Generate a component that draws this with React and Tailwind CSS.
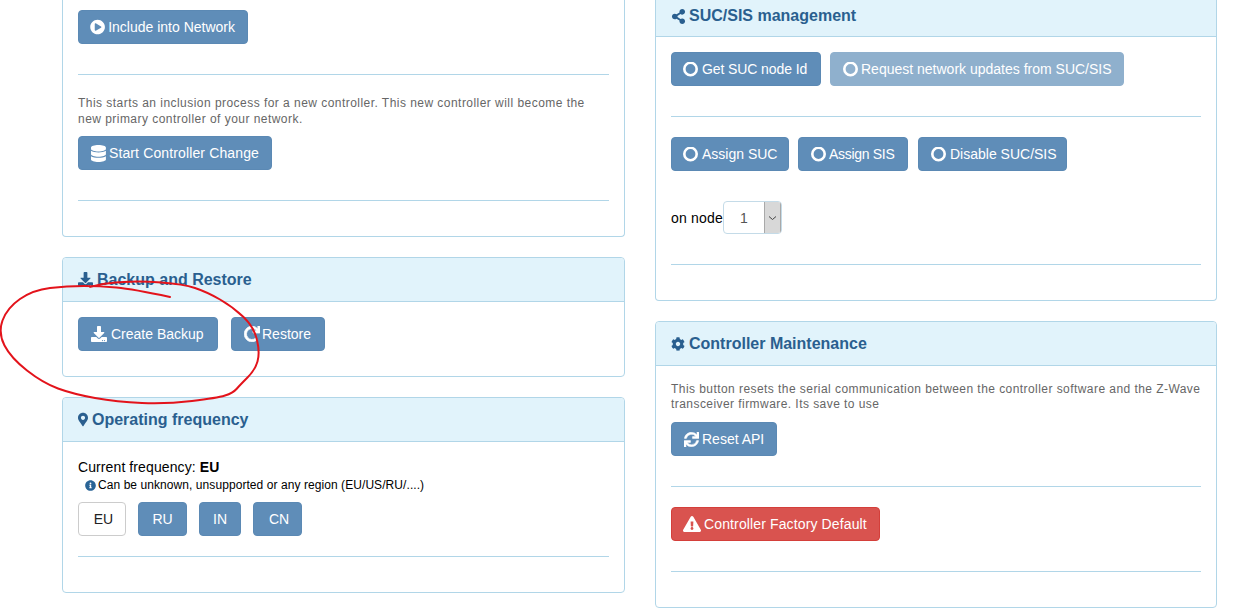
import { FaPlayCircle, FaDatabase, FaDownload, FaRedo, FaSync, FaExclamationTriangle, FaCog, FaMapMarkerAlt, FaInfoCircle, FaShareAlt } from 'react-icons/fa';

// red pen annotation drawn on top of the screenshot
const curve = [
  [170, 297], [133, 289], [100, 286], [67, 286], [33, 290], [7, 308], [-2, 333], [11, 358], [43, 383], [73, 394],
  [117, 402], [167, 404], [217, 398], [233, 393], [240, 385], [255, 370], [260, 353], [254, 327], [233, 307],
  [207, 292], [183, 284], [140, 281], [107, 283], [90, 287],
];

function curvePath(points) {
  let d = `M${points[0][0]} ${points[0][1]}`;
  for (let i = 1; i < points.length - 1; i++) {
    const mx = (points[i][0] + points[i + 1][0]) / 2;
    const my = (points[i][1] + points[i + 1][1]) / 2;
    d += ` Q${points[i][0]} ${points[i][1]} ${mx} ${my}`;
  }
  const last = points[points.length - 1];
  return `${d} L${last[0]} ${last[1]}`;
}

function RingIcon({ className = '' }) {
  return (
    <svg className={`w-[15px] h-[15px] shrink-0 ${className}`} viewBox="0 0 15 15">
      <circle cx="7.5" cy="7" r="6.2" fill="none" stroke="currentColor" strokeWidth="2.6" />
    </svg>
  );
}

function Btn({ icon, children, faded, danger, className = '' }) {
  const color = danger
    ? 'bg-[#d9534f] border-[#d43f3a]'
    : faded
      ? 'bg-[#8fb0cd] border-[#8fb0cd]'
      : 'bg-[#5f8db8] border-[#5b89b4]';
  return (
    <button className={`h-[34px] px-3 border rounded text-sm text-white flex items-center whitespace-nowrap ${color} ${className}`}>
      {icon}
      {children}
    </button>
  );
}

function Panel({ icon, title, children, className = '', bodyClass = '' }) {
  return (
    <section className={`border border-[#b1d6e8] rounded bg-white ${className}`}>
      <h3 className="h-[44px] px-[15px] flex items-center gap-1 bg-[#e1f3fb] border-b border-[#b1d6e8] rounded-t text-base font-bold text-[#2a5f8f]">
        {icon}
        {title}
      </h3>
      <div className={`px-[15px] ${bodyClass}`}>{children}</div>
    </section>
  );
}

function Rule({ className = '' }) {
  return <hr className={`border-0 border-t border-[#b1d6e8] ${className}`} />;
}

export default function App() {
  return (
    <div className="relative w-[1234px] h-[612px] overflow-hidden bg-white font-['Liberation_Sans',Arial,sans-serif] text-sm text-black">
      <div className="flex gap-[30px] pl-[62px]">
        {/* Left column */}
        <div className="w-[563px] flex flex-col gap-5">
          <section className="h-[237px] border border-t-0 border-[#b1d6e8] rounded-b bg-white px-[15px] pt-[10px]">
            <Btn icon={<FaPlayCircle className="text-base -ml-px mr-[3px]" />} className="w-[170px]">Include into Network</Btn>
            <Rule className="mt-[30px]" />
            <p className="mt-5 text-xs leading-4 tracking-[0.46px] text-[#666]">
              This starts an inclusion process for a new controller. This new controller will become the
              <br />
              new primary controller of your network.
            </p>
            <Btn icon={<FaDatabase className="w-[15px] h-[17px] mr-[3px]" />} className="mt-[9px] w-[194px] tracking-[0.13px]">Start Controller Change</Btn>
            <Rule className="mt-[30px]" />
          </section>

          <Panel icon={<FaDownload className="text-[15px]" />} title="Backup and Restore" className="h-[120px]" bodyClass="pt-[15px]">
            <div className="flex gap-[13px]">
              <Btn icon={<FaDownload className="text-base mr-1" />} className="w-[140px]">Create Backup</Btn>
              <Btn icon={<FaRedo className="text-base mr-[2px]" stroke="currentColor" strokeWidth={24} />} className="w-[94px]">Restore</Btn>
            </div>
          </Panel>

          <Panel icon={<FaMapMarkerAlt className="w-[10px] h-[15px]" />} title="Operating frequency" className="h-[196px]" bodyClass="pt-[17px]">
            <p className="leading-[17px] tracking-[0.1px]">Current frequency: <b>EU</b></p>
            <p className="mt-[1px] ml-[7px] flex items-center gap-[2px] text-xs leading-4 tracking-[0.07px]">
              <FaInfoCircle className="text-[11px] text-[#2a6496]" />
              Can be unknown, unsupported or any region (EU/US/RU/....)
            </p>
            <div className="flex gap-3 mt-[9px]">
              <button className="h-[34px] w-12 pl-[3px] border border-[#ccc] rounded bg-white text-sm text-[#222]">EU</button>
              <Btn className="w-[49px] justify-center">RU</Btn>
              <Btn className="w-[42px] justify-center">IN</Btn>
              <Btn className="w-[49px] justify-center pl-[15px]">CN</Btn>
            </div>
            <Rule className="mt-5" />
          </Panel>
        </div>

        {/* Right column */}
        <div className="w-[562px] flex flex-col gap-5">
          <section className="h-[301px] border border-t-0 border-[#b1d6e8] rounded-b bg-white">
            <h3 className="h-[37px] px-[15px] pb-1 flex items-center gap-[3px] bg-[#e1f3fb] border-b border-[#b1d6e8] text-base font-bold text-[#2a5f8f]">
              <FaShareAlt className="text-[15px]" />
              SUC/SIS management
            </h3>
            <div className="px-[15px]">
              <div className="flex gap-[9px] mt-[15px]">
                <Btn icon={<RingIcon className="-ml-px mr-1" />} className="w-[150px] tracking-[-0.1px]">Get SUC node Id</Btn>
                <Btn faded icon={<RingIcon className="mr-[3px]" />} className="w-[294px]">Request network updates from SUC/SIS</Btn>
              </div>
              <Rule className="mt-[30px]" />
              <div className="flex gap-[9px] mt-5">
                <Btn icon={<RingIcon className="-ml-px mr-1" />} className="w-[118px]">Assign SUC</Btn>
                <Btn icon={<RingIcon className="mr-[3px]" />} className="w-[110px] tracking-[-0.3px]">Assign SIS</Btn>
                <Btn icon={<RingIcon className="mr-1" />} className="w-[149px] ml-px">Disable SUC/SIS</Btn>
              </div>
              <div className="flex items-center mt-[30px] h-[33px]">
                <span className="tracking-[0.2px]">on node</span>
                <div className="w-[59px] h-[33px] flex border border-[#c4dbe8] rounded overflow-hidden bg-white">
                  <span className="flex-1 pl-[16px] leading-[32px] text-[#555]">1</span>
                  <span className="w-[17px] flex items-center justify-center bg-[#d8d8d8] border-x border-[#a9a9a9]">
                    <svg className="w-[9px] h-[6px] text-[#444]" viewBox="0 0 9 6">
                      <path d="M1 1.5 4.5 4.5 8 1.5" fill="none" stroke="currentColor" strokeWidth="1" />
                    </svg>
                  </span>
                </div>
              </div>
              <Rule className="mt-[30px]" />
            </div>
          </section>

          <Panel icon={<FaCog className="text-[14px]" />} title="Controller Maintenance" className="h-[287px]" bodyClass="pt-[16px]">
            <p className="text-xs leading-[15px] tracking-[0.44px] text-[#666]">
              This button resets the serial communication between the controller software and the Z-Wave
              <br />
              transceiver firmware. Its save to use
            </p>
            <Btn icon={<FaSync className="text-[15px] mr-[3px]" stroke="currentColor" strokeWidth={16} />} className="mt-[10px]">Reset API</Btn>
            <Rule className="mt-[30px]" />
            <Btn danger icon={<FaExclamationTriangle className="text-lg -ml-px mr-[3px]" />} className="mt-5 w-[209px] tracking-[0.13px]">Controller Factory Default</Btn>
            <Rule className="mt-[30px]" />
          </Panel>
        </div>
      </div>

      <svg className="absolute inset-0 pointer-events-none" width="1234" height="612">
        <path d={curvePath(curve)} fill="none" stroke="#e3131b" strokeWidth="2" strokeLinecap="round" />
      </svg>
    </div>
  );
}
